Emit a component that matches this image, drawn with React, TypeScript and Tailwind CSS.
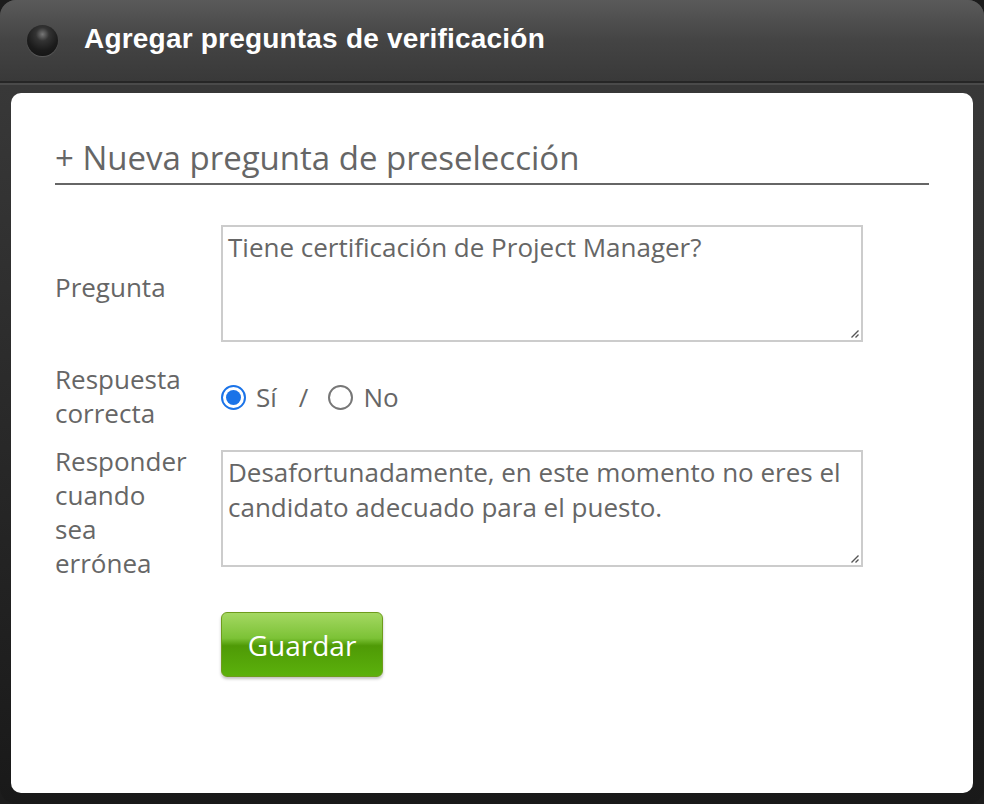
const bodyFont = { fontFamily: '"Open Sans", "Noto Sans", sans-serif' }

function Radio({ checked }: { checked?: boolean }) {
  return checked ? (
    <span className="w-[25px] h-[25px] shrink-0 rounded-full border-[2px] border-[#1a73e8] flex items-center justify-center bg-white">
      <span className="w-[15px] h-[15px] rounded-full bg-[#1a73e8]" />
    </span>
  ) : (
    <span className="w-[25px] h-[25px] shrink-0 rounded-full border-[2px] border-[#777] bg-white" />
  )
}

function Grip() {
  return (
    <svg className="absolute right-[1px] bottom-[1px]" width="11" height="11" viewBox="0 0 11 11">
      <path d="M9.5 2.5 L2.5 9.5 M9.5 6.5 L6.5 9.5" stroke="#555" strokeWidth="1.4" />
    </svg>
  )
}

export default function App() {
  return (
    <div className="w-[984px] h-[804px] bg-[#1c1c1c]" style={bodyFont}>
      <div className="w-full h-full rounded-[16px] overflow-hidden flex flex-col bg-gradient-to-b from-[#3c3c3c] to-[#191919]">
        {/* header */}
        <div className="h-[81px] shrink-0 flex items-center bg-gradient-to-b from-[#5a5a5a] via-[#444] to-[#393939] px-[27px]">
          <div className="w-[31px] h-[31px] rounded-full bg-[radial-gradient(circle_at_50%_30%,#777_0%,#333_25%,#1b1b1b_60%,#111_100%)] shadow-[0_1px_1px_rgba(255,255,255,0.15)]" />
          <h1
            className="ml-[26px] text-white font-bold text-[28px] tracking-[0.2px] leading-none mb-[4px]"
            style={{ fontFamily: '"Liberation Sans", Arial, sans-serif' }}
          >
            Agregar preguntas de verificación
          </h1>
        </div>
        <div className="h-[2px] bg-[#262626]" />
        <div className="h-[2px] bg-[#4a4a4a]" />
        {/* body */}
        <div className="flex-1 px-[11px] pt-[8px] pb-[11px]">
          <div className="bg-white rounded-[10px] h-full px-[44px] pt-[45px] text-[#666]">
            <div className="border-b-[2px] border-[#666] pb-[5px]">
              <h2 className="text-[33px] leading-[40px] text-[#666]">+ Nueva pregunta de preselección</h2>
            </div>

            <div className="flex items-center mt-[40px]">
              <div className="w-[166px] text-[26px] leading-[34px] mt-[7px]">Pregunta</div>
              <div className="relative w-[642px] h-[117px] border-[2px] border-[#ccc] px-[5px] py-[3px] text-[26px] leading-[35px]">
                Tiene certificación de Project Manager?
                <Grip />
              </div>
            </div>

            <div className="flex items-center mt-[20px]">
              <div className="w-[166px] text-[26px] leading-[34px]">
                Respuesta
                <br />
                correcta
              </div>
              <div className="flex items-center text-[26px] leading-[34px] mt-[2px]">
                <Radio checked />
                <span className="ml-[10px]">Sí</span>
                <span className="ml-[22px]">/</span>
                <span className="ml-[20px] flex">
                  <Radio />
                </span>
                <span className="ml-[10px]">No</span>
              </div>
            </div>

            <div className="flex items-start mt-[14px]">
              <div className="w-[166px] pr-[28px] text-[26px] leading-[34px]">Responder cuando sea errónea</div>
              <div className="relative w-[642px] h-[117px] mt-[6px] border-[2px] border-[#ccc] px-[5px] py-[3px] text-[26px] leading-[35px]">
                Desafortunadamente, en este momento no eres el candidato adecuado para el puesto.
                <Grip />
              </div>
            </div>

            <div className="ml-[166px] mt-[32px]">
              <button className="w-[162px] h-[65px] rounded-[6px] border border-[#6e9c1c] bg-[linear-gradient(to_bottom,#a4d862_0%,#7cc236_40%,#4f9a06_52%,#5bb10c_100%)] text-white text-[28px] shadow-[0_2px_3px_rgba(0,0,0,0.25)]">
                Guardar
              </button>
            </div>
          </div>
        </div>
      </div>
    </div>
  )
}
